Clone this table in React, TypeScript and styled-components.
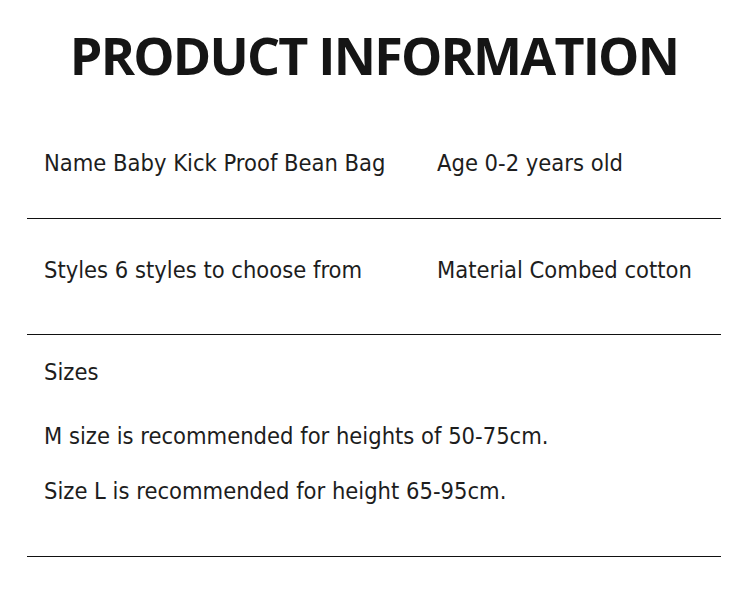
import React from "react";
import styled, { createGlobalStyle } from "styled-components";

const Global = createGlobalStyle`
  html, body { margin: 0; padding: 0; background: #fff; }
  body { width: 750px; height: 594px; overflow: hidden; }
`;

const Page = styled.div`
  width: 750px;
  height: 594px;
  box-sizing: border-box;
  padding: 0 29px 0 27px;
  background: #fff;
  color: #1d1d1d;
  font-family: "DejaVu Sans Condensed", "DejaVu Sans", sans-serif;
`;

const Title = styled.h1`
  margin: 0;
  padding-top: 25px;
  height: 111px;
  box-sizing: border-box;
  text-align: center;
  font-family: "Open Sans", "DejaVu Sans", sans-serif;
  font-weight: 700;
  font-size: 52px;
  line-height: 60px;
  color: #151515;
  letter-spacing: -1.8px;
`;

const Section = styled.section<{ $h: number; $pt: number }>`
  height: ${(p) => p.$h}px;
  box-sizing: border-box;
  padding-top: ${(p) => p.$pt}px;
  border-bottom: 1px solid #111;
`;

const Row = styled.div`
  display: grid;
  grid-template-columns: 393px 1fr;
  padding-left: 17px;
`;

const Text = styled.p<{ $mt?: number }>`
  margin: ${(p) => p.$mt ?? 0}px 0 0;
  font-size: 23.5px;
  line-height: 28px;
  white-space: nowrap;
`;

export default function App() {
  return (
    <>
      <Global />
      <Page>
        <Title>PRODUCT INFORMATION</Title>
        <Section $h={108} $pt={38}>
          <Row>
            <Text>Name Baby Kick Proof Bean Bag</Text>
            <Text>Age 0-2 years old</Text>
          </Row>
        </Section>
        <Section $h={116} $pt={37}>
          <Row>
            <Text>Styles 6 styles to choose from</Text>
            <Text>Material Combed cotton</Text>
          </Row>
        </Section>
        <Section $h={222} $pt={23}>
          <Row>
            <Text>Sizes</Text>
          </Row>
          <Row>
            <Text $mt={36}>M size is recommended for heights of 50-75cm.</Text>
          </Row>
          <Row>
            <Text $mt={27}>Size L is recommended for height 65-95cm.</Text>
          </Row>
        </Section>
      </Page>
    </>
  );
}
